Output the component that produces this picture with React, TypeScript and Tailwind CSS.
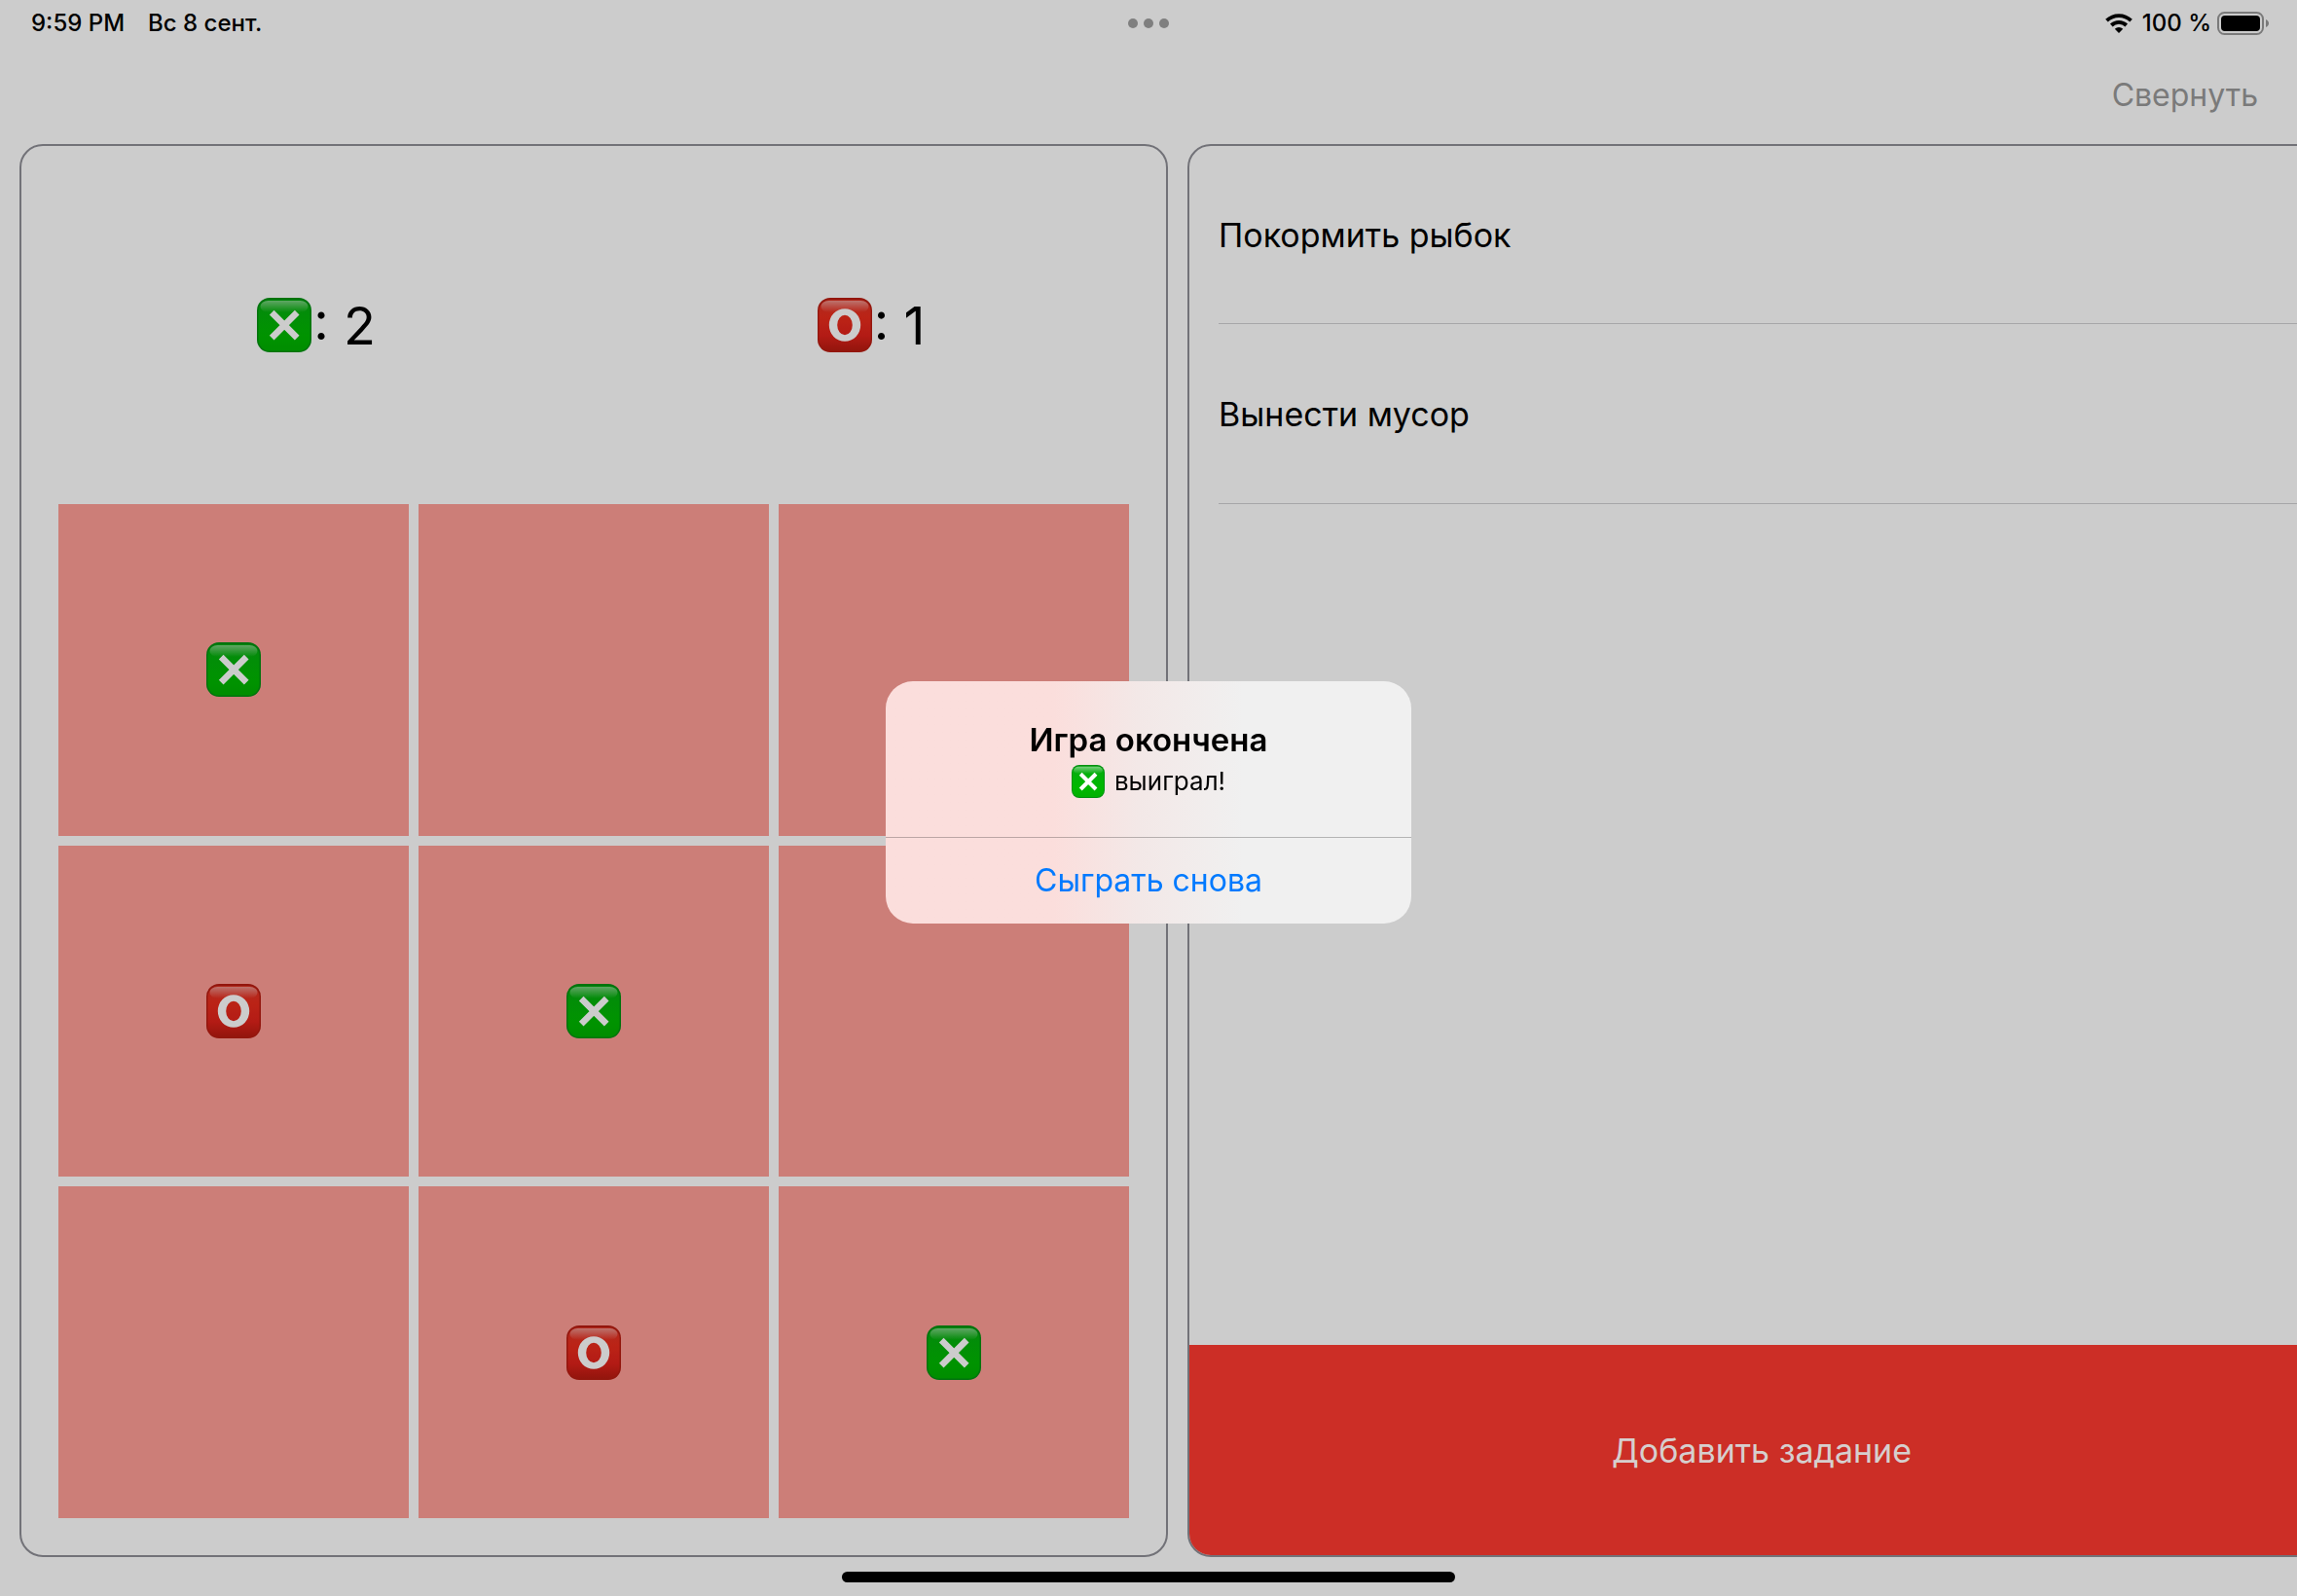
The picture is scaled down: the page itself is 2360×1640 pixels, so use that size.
import { useId } from "react";

type Mark = "x" | "o";

function Emoji({ mark, className = "" }: { mark: Mark; className?: string }) {
  const id = useId();
  const green = mark === "x";
  return (
    <svg
      viewBox="0 0 56 56"
      role="img"
      aria-label={green ? "Крестик" : "Нолик"}
      className={`shrink-0 ${className}`}
    >
      <defs>
        <linearGradient id={`${id}b`} x1="0" y1="0" x2="0" y2="1">
          <stop offset="0" stopColor={green ? "#08a812" : "#dc3426"} />
          <stop offset="0.35" stopColor={green ? "#02b208" : "#ea2c1c"} />
          <stop offset="0.7" stopColor={green ? "#00b800" : "#e0221a"} />
          <stop offset="1" stopColor={green ? "#00b000" : "#b81a10"} />
        </linearGradient>
        <linearGradient id={`${id}g`} x1="0" y1="0" x2="0" y2="1">
          <stop offset="0" stopColor="#fff" stopOpacity="0.45" />
          <stop offset="1" stopColor="#fff" stopOpacity="0" />
        </linearGradient>
      </defs>
      <rect width="56" height="56" rx="13" fill={green ? "#009010" : "#b81c10"} />
      <rect x="1.5" y="2" width="53" height="52.5" rx="11.5" fill={`url(#${id}b)`} />
      <rect x="3.5" y="3" width="49" height="12" rx="8" fill={`url(#${id}g)`} />
      {green ? (
        <path d="M15.2 15.2L41.2 41.2M41.2 15.2L15.2 41.2" stroke="#fff" strokeWidth="6.6" />
      ) : (
        <path
          fill="#fff"
          fillRule="evenodd"
          d="M28 11.2a16.2 16.8 0 1 0 0 33.6a16.2 16.8 0 1 0 0-33.6zM28 17.8a7.8 10.2 0 1 1 0 20.4a7.8 10.2 0 1 1 0-20.4z"
        />
      )}
    </svg>
  );
}

function StatusBar() {
  return (
    <div className="grid h-12 grid-cols-3 items-center px-7 text-[24px] font-medium">
      <div className="flex gap-6 pl-1">
        <span>9:59 PM</span>
        <span>Вс 8 сент.</span>
      </div>
      <div className="flex justify-center gap-1.5">
        <i className="size-2.5 rounded-full bg-[#7f7f7f]" />
        <i className="size-2.5 rounded-full bg-[#7f7f7f]" />
        <i className="size-2.5 rounded-full bg-[#7f7f7f]" />
      </div>
      <div className="flex items-center justify-end gap-1.5">
        <svg viewBox="0 0 28 20" className="mr-1 h-5 w-7" aria-label="Wi-Fi">
          <path d="M1.5 7.2a18 18 0 0 1 25 0" fill="none" stroke="#000" strokeWidth="3.8" />
          <path d="M6.3 12a11.2 11.2 0 0 1 15.4 0" fill="none" stroke="#000" strokeWidth="3.8" />
          <path d="M14 20l-4.2-4.3a6.2 6.2 0 0 1 8.4 0z" />
        </svg>
        <span>100 %</span>
        <svg viewBox="0 0 54 24" className="h-6 w-[54px]" aria-label="Батарея">
          <rect x="1" y="1" width="46" height="22" rx="6.5" fill="none" stroke="#7a7a7a" strokeWidth="2" />
          <rect x="4" y="4" width="40" height="16" rx="4" />
          <path d="M50 8c4 1.500 4 6.500 0 8z" fill="#7a7a7a" />
        </svg>
      </div>
    </div>
  );
}

function Score({ mark, value }: { mark: Mark; value: number }) {
  return (
    <div className="flex flex-1 items-center justify-center gap-0.5 text-[54px]">
      <Emoji mark={mark} className="size-14 brightness-80" />
      <span>: {value}</span>
    </div>
  );
}

const board: (Mark | null)[] = ["x", null, null, "o", "x", null, null, "o", "x"];
const tasks = ["Покормить рыбок", "Вынести мусор"];

export default function App() {
  return (
    <div className="flex min-h-screen flex-col overflow-hidden bg-[#ccc] font-['Inter','Liberation_Sans',sans-serif] text-black">
      <StatusBar />
      <header className="flex h-[100px] items-center justify-end px-10">
        <button type="button" className="text-[32px] leading-10 text-[#7a7a7a]">
          Свернуть
        </button>
      </header>

      <main className="-mr-5 flex flex-1 gap-5 pl-5">
        <section className="flex w-1/2 shrink-0 flex-col rounded-3xl border-2 border-[#727278] px-[38px] pb-[38px]">
          <div className="-mx-5 flex h-[368px]">
            <Score mark="x" value={2} />
            <Score mark="o" value={1} />
          </div>
          <div className="grid flex-1 grid-cols-3 grid-rows-3 gap-2.5">
            {board.map((mark, i) => (
              <button
                key={i}
                type="button"
                aria-label={`Клетка ${i + 1}`}
                className="flex items-center justify-center bg-[#cc7e78]"
              >
                {mark && <Emoji mark={mark} className="size-14 brightness-80" />}
              </button>
            ))}
          </div>
        </section>

        <section className="flex w-1/2 shrink-0 flex-col overflow-hidden rounded-3xl border-2 border-[#727278]">
          <ul className="flex-1 pl-[30px] text-[34px]">
            {tasks.map((task) => (
              <li
                key={task}
                className="flex h-[185px] items-center border-b border-[#a6a6a8] first:h-[183px]"
              >
                {task}
              </li>
            ))}
          </ul>
          <button type="button" className="h-[216px] bg-[#cc2e26] text-[34px] text-[#d6cfce]">
            Добавить задание
          </button>
        </section>
      </main>

      <footer className="flex h-10 items-center justify-center">
        <div className="h-[11px] w-[630px] rounded-full bg-black" />
      </footer>

      <div className="fixed inset-0 flex items-center justify-center pt-2">
        <div
          role="alertdialog"
          aria-labelledby="alert-title"
          aria-describedby="alert-text"
          className="flex w-[540px] flex-col overflow-hidden rounded-[28px] bg-linear-to-r from-[#fbdedc] from-32% via-[#f3e8e7] via-48% to-[#f0f0f0] to-68%"
        >
          <div className="flex h-40 flex-col items-center pt-10">
            <h1 id="alert-title" className="text-[33px] leading-10 font-semibold">
              Игра окончена
            </h1>
            <p id="alert-text" className="flex items-center gap-2.5 text-[26px] leading-[46px]">
              <Emoji mark="x" className="size-[34px]" />
              выиграл!
            </p>
          </div>
          <button
            type="button"
            className="h-[89px] border-t border-black/25 text-[32px] text-[#007aff]"
          >
            Сыграть снова
          </button>
        </div>
      </div>
    </div>
  );
}
